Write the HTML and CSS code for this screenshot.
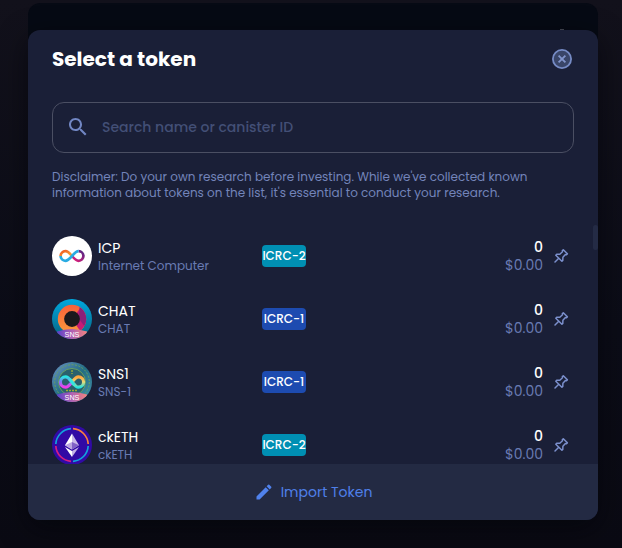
FILE: index.html
```html
<!DOCTYPE html>
<html lang="en">
<head>
<meta charset="utf-8">
<title>Select a token</title>
<link rel="stylesheet" href="styles.css">
</head>
<body>
<svg class="defs" width="0" height="0" aria-hidden="true">
  <defs>
    <linearGradient id="warm" x1="0" y1="0" x2="1" y2="1"><stop offset="0" stop-color="#f15a24"/><stop offset="1" stop-color="#fbb03b"/></linearGradient>
    <linearGradient id="orange" x1="0" y1="0" x2="0" y2="1"><stop offset="0" stop-color="#f9603a"/><stop offset="1" stop-color="#fb9a3c"/></linearGradient>
    <linearGradient id="pink" x1="1" y1="0" x2="0" y2="1"><stop offset="0" stop-color="#522785"/><stop offset="1" stop-color="#ed1e79"/></linearGradient>
    <linearGradient id="sea" x1="0" y1="0" x2="0" y2="1"><stop offset="0" stop-color="#00a9e0"/><stop offset="1" stop-color="#08617e"/></linearGradient>
    <linearGradient id="ribbon" x1="0" y1="0" x2="1" y2="0"><stop offset="0" stop-color="#5a3fc8"/><stop offset=".5" stop-color="#b062b4"/><stop offset="1" stop-color="#f4837d"/></linearGradient>
    <linearGradient id="neonL" x1="0" y1="0" x2="0" y2="1"><stop offset="0" stop-color="#28e8e2"/><stop offset=".45" stop-color="#7d7df5"/><stop offset="1" stop-color="#f43cec"/></linearGradient>
    <linearGradient id="neonR" x1="0" y1="0" x2="0" y2="1"><stop offset="0" stop-color="#ffa63d"/><stop offset=".5" stop-color="#e8d878"/><stop offset="1" stop-color="#24e4e0"/></linearGradient>
    <linearGradient id="disc" x1="0" y1="0" x2="1" y2="1"><stop offset="0" stop-color="#6d93c4"/><stop offset=".5" stop-color="#236d83"/><stop offset="1" stop-color="#4693ae"/></linearGradient>
    <clipPath id="round"><circle cx="20" cy="20" r="20"/></clipPath>
    <symbol id="pin" viewBox="0 0 16 16"><path d="M10.3 1.7 14.4 5.8 13.2 6.8 12.4 6.6 9.9 9.3 9.8 12.4 8.9 13.3 2.8 7.2 3.7 6.3 6.8 6.2 9.5 3.7 9.3 2.8ZM5.8 10.2 2 14" fill="none" stroke="currentColor" stroke-width="1.5" stroke-linejoin="round" stroke-linecap="round"/></symbol>
  </defs>
</svg>
<div class="backdrop"><span class="speck"></span></div>
<main class="modal">
  <header class="head">
    <h1>Select a token</h1>
    <svg class="close" width="20" height="20" viewBox="0 0 20 20"><circle cx="10" cy="10" r="9.1" fill="#394568" stroke="#768bc5" stroke-width="1.8"/><path d="m6.6 6.6 6.8 6.8m0-6.8-6.8 6.8" stroke="#8295cc" stroke-width="1.8"/></svg>
  </header>
  <div class="search">
    <svg class="glass" width="24" height="24" viewBox="0 0 24 24"><path fill="#7186c3" d="M15.5 14h-.79l-.28-.27C15.41 12.59 16 11.11 16 9.5 16 5.91 13.09 3 9.5 3S3 5.91 3 9.5 5.91 16 9.5 16c1.61 0 3.09-.59 4.23-1.57l.27.28v.79l5 4.99L20.49 19l-4.99-5zm-6 0C7.01 14 5 11.99 5 9.5S7.01 5 9.5 5 14 7.01 14 9.5 11.99 14 9.5 14z"/></svg>
    <span class="placeholder">Search name or canister ID</span>
  </div>
  <p class="note">Disclaimer: Do your own research before investing. While we've collected known<br>information about tokens on the list, it's essential to conduct your research.</p>
  <section class="list">
    <div class="row">
      <svg class="logo" viewBox="0 0 40 40"><circle cx="20" cy="20" r="20" fill="#fff"/><g fill="none" stroke-width="2.7"><path d="M20 20c-2.2-2.6-4.2-4.8-6.6-4.8A4.8 4.8 0 0 0 8.6 20" stroke="url(#warm)"/><path d="M20 20c2.2 2.6 4.2 4.8 6.6 4.8a4.8 4.8 0 0 0 0-9.6" stroke="url(#pink)"/><path d="M8.6 20a4.8 4.8 0 0 0 4.8 4.8c4.8 0 8.4-9.6 13.2-9.6" stroke="#29abe2"/></g></svg>
      <div class="name"><b>ICP</b><small>Internet Computer</small></div>
      <span class="tag teal">ICRC-2</span>
      <div class="amount"><b>0</b><span>$0.00</span></div>
      <svg class="pin"><use href="#pin"/></svg>
    </div>
    <div class="row">
      <svg class="logo" viewBox="0 0 40 40"><g clip-path="url(#round)"><path fill="url(#sea)" d="M0 0h40v40H0z"/><circle cx="20" cy="20" r="14.2" fill="url(#orange)"/><path d="M20 20 28.5 8.7A14.2 14.2 0 0 1 28 31.8Z" fill="#c41c75"/><path d="M27.5 8a14.2 14.2 0 0 1 4.8 19L27 20Z" fill="#8a2079"/><circle cx="20" cy="20" r="7.9" fill="#1b191d"/><path d="M5 32.5q15-5 30 0v8H5Z" fill="url(#ribbon)"/></g><text x="20" y="37.6">SNS</text></svg>
      <div class="name"><b>CHAT</b><small>CHAT</small></div>
      <span class="tag blue">ICRC-1</span>
      <div class="amount"><b>0</b><span>$0.00</span></div>
      <svg class="pin"><use href="#pin"/></svg>
    </div>
    <div class="row">
      <svg class="logo" viewBox="0 0 40 40"><g clip-path="url(#round)"><path fill="url(#disc)" d="M0 0h40v40H0z"/><circle cx="20" cy="20" r="17.3" fill="none" stroke="#6ba35b" stroke-width="1" stroke-dasharray="2 1.5"/><circle cx="20" cy="20" r="13.5" fill="#2a606d" stroke="#77ad5b" stroke-width=".8"/><path d="M20 8v4m-6 16.5h12" stroke="#9bac35" stroke-width="1.4" stroke-dasharray="2 1"/><path d="M5 32.5q15-5 30 0v8H5Z" fill="url(#ribbon)"/></g><g fill="none" stroke-width="3.2"><path d="M20 20c-2-2.5-4-5.2-6.4-5.2a5.2 5.2 0 0 0 0 10.4c2.4 0 4.4-2.7 6.4-5.2" stroke="url(#neonL)"/><path d="M20 20c2-2.5 4-5.2 6.4-5.2a5.2 5.2 0 0 1 0 10.4c-2.4 0-4.4-2.7-6.4-5.2" stroke="url(#neonR)"/><path d="m17.5 17 5 6" stroke="#35e4e0"/></g><text x="20" y="37.6">SNS</text></svg>
      <div class="name"><b>SNS1</b><small>SNS-1</small></div>
      <span class="tag blue">ICRC-1</span>
      <div class="amount"><b>0</b><span>$0.00</span></div>
      <svg class="pin"><use href="#pin"/></svg>
    </div>
    <div class="row">
      <svg class="logo" viewBox="0 0 40 40"><circle cx="20" cy="20" r="20" fill="#310aa5"/><g fill="none" stroke-width="1.7"><path d="M3.8 19A16.3 16.3 0 0 1 19 3.7M36.2 21A16.3 16.3 0 0 1 21 36.3" stroke="#13a1dc"/><path d="M21 3.7A16.3 16.3 0 0 1 36.2 19" stroke="#f97f3e"/><path d="M3.8 21A16.3 16.3 0 0 0 19 36.3" stroke="#d81f80"/></g><path d="m20 8.5-7 11.8 7 4.2Z" fill="#fff"/><path d="m20 8.5 7 11.8-7 4.2Z" fill="#c9b9e8"/><path d="m13 20.3 7-3.2v7.4Z" fill="#bba7e3"/><path d="m27 20.3-7-3.2v7.4Z" fill="#8162c6"/><path d="m13 22 7 4.1V32Z" fill="#fff"/><path d="m27 22-7 4.1V32Z" fill="#c3b1e6"/></svg>
      <div class="name"><b>ckETH</b><small>ckETH</small></div>
      <span class="tag teal">ICRC-2</span>
      <div class="amount"><b>0</b><span>$0.00</span></div>
      <svg class="pin"><use href="#pin"/></svg>
    </div>
    <i class="thumb"></i>
  </section>
  <footer class="foot">
    <svg width="20" height="20" viewBox="0 0 24 24"><path fill="#5082ed" d="M3 17.25V21h3.75L17.81 9.94l-3.75-3.75L3 17.25zM20.71 7.04c.39-.39.39-1.02 0-1.41l-2.34-2.34a.9959.9959 0 0 0-1.41 0l-1.83 1.83 3.75 3.75 1.83-1.83z"/></svg>
    <span>Import Token</span>
  </footer>
</main>
</body>
</html>
```
FILE: styles.css
```css
* { box-sizing: border-box; }
body {
  margin: 0;
  width: 622px;
  height: 548px;
  padding: 30px 24px 28px 28px;
  overflow: hidden;
  background: linear-gradient(#12111b, #0b0c17 60%, #0a0a13);
  color: #fff;
  font-family: Poppins, Inter, sans-serif;
}
.defs { position: absolute; }
.backdrop {
  position: absolute;
  left: 28px;
  top: 3px;
  width: 570px;
  height: 517px;
  border-radius: 12px;
  background: #060a14;
}
.speck { position: absolute; left: 532px; top: 26px; width: 4px; height: 1px; background: #454954; }
.modal {
  position: relative;
  width: 570px;
  height: 490px;
  display: flex;
  flex-direction: column;
  border-radius: 12px;
  overflow: hidden;
  background: #1a1f37;
  box-shadow: 0 8px 28px rgba(0, 4, 8, .55);
}
.head { height: 72px; padding: 19px 26px 0 24px; display: flex; justify-content: space-between; align-items: flex-start; }
h1 { margin: -5px 0 0; font-size: 20px; line-height: 30px; font-weight: 700; white-space: nowrap; }
.search {
  height: 51px;
  margin: 0 24px;
  padding-left: 13px;
  display: flex;
  align-items: center;
  gap: 12px;
  border: 1px solid #4b4f63;
  border-radius: 12px;
}
.glass { margin-top: -2px; }
.placeholder { font-size: 14px; font-weight: 500; color: #434f76; white-space: nowrap; }
.note { height: 32px; margin: 16px 24px 0; font-size: 12px; line-height: 16px; color: #7384ba; white-space: nowrap; }
.list { position: relative; flex: 1; margin-top: 23px; overflow: hidden; }
.row { height: 63px; padding: 0 29px 0 24px; display: flex; align-items: center; }
.logo { width: 40px; height: 40px; flex: none; }
.logo text { font-family: "Liberation Sans", sans-serif; font-size: 7.2px; fill: #fff; text-anchor: middle; }
.name { width: 170px; padding-left: 6px; display: flex; flex-direction: column; white-space: nowrap; }
.name b { font-size: 14px; line-height: 20px; font-weight: 400; }
.name small { font-size: 12px; line-height: 16px; color: #697bb3; }
.tag { width: 44px; height: 22px; flex: none; display: flex; align-items: center; justify-content: center; border-radius: 4px; font-size: 12px; font-weight: 500; white-space: nowrap; }
.teal { background: #008fb3; }
.blue { background: #1d4bb0; }
.amount { width: 237px; text-align: right; display: flex; flex-direction: column; font-size: 14px; line-height: 18px; color: #697bb3; }
.amount b { color: #fff; font-weight: 500; }
.pin { width: 16px; height: 16px; margin-left: 10px; flex: none; color: #7b8fcc; }
.thumb { position: absolute; right: 0; top: 1px; width: 5px; height: 25px; border-radius: 3px; background: #242b45; }
.foot { height: 56px; display: flex; align-items: center; justify-content: center; gap: 7px; background: #232a43; color: #4f80ea; font-size: 14px; white-space: nowrap; }
```
